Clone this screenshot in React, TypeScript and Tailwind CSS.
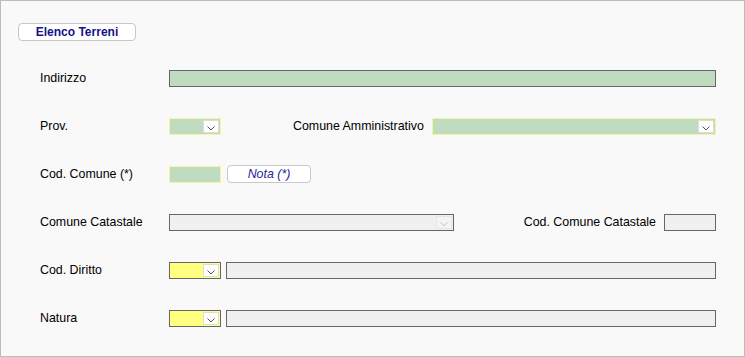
const font = { fontFamily: '"Liberation Sans", Arial, sans-serif' };

function Arrow({ disabled }: { disabled?: boolean }) {
  return (
    <div
      className={`absolute right-[1px] top-[1px] w-[16px] h-[13px] border flex items-end justify-center pb-[1px] ${
        disabled ? "bg-[#f4f4f4] border-[#e6e6e6]" : "bg-white border-[#dcdcdc]"
      }`}
    >
      <svg width="8" height="5" viewBox="0 0 8 5">
        <path d="M0.5 0.5 L4 4 L7.5 0.5" fill="none" stroke={disabled ? "#c4c4c4" : "#555"} strokeWidth="1" />
      </svg>
    </div>
  );
}

function Select({ w, bg, border, disabled }: { w: string; bg: string; border: string; disabled?: boolean }) {
  return (
    <div className={`relative h-[17px] border ${w} ${bg} ${border}`}>
      <Arrow disabled={disabled} />
    </div>
  );
}

export default function App() {
  return (
    <div style={font} className="w-[745px] h-[357px] border border-[#bcbcbc] bg-[#f9f9f9] text-[12.4px] text-black">
      <div className="pt-[22px] pl-[17px]">
        <button className="w-[118px] h-[18px] bg-white border border-[#c8c8c8] rounded-[4px] text-[12px] font-bold text-[#16128a] leading-none">
          Elenco Terreni
        </button>
      </div>

      <div className="ml-[39px] w-[676px] mt-[28px] flex flex-col gap-[31px]">
        {/* Indirizzo */}
        <div className="flex items-center h-[17px]">
          <span className="w-[129px]">Indirizzo</span>
          <div className="flex-1 h-[17px] bg-[#c0dcc0] border border-[#666]" />
        </div>

        {/* Prov. / Comune Amministrativo */}
        <div className="flex items-center h-[17px]">
          <span className="w-[129px]">Prov.</span>
          <Select w="w-[52px]" bg="bg-[#c0dcc0]" border="border-[#f5f59c]" />
          <span className="ml-[72px] w-[139px]">Comune Amministrativo</span>
          <Select w="w-[284px]" bg="bg-[#c0dcc0]" border="border-[#f5f59c]" />
        </div>

        {/* Cod. Comune */}
        <div className="flex items-center h-[17px]">
          <span className="w-[129px]">Cod. Comune (*)</span>
          <div className="w-[52px] h-[17px] bg-[#c0dcc0] border border-[#f5f59c]" />
          <button className="ml-[6px] w-[84px] h-[18px] bg-white border border-[#c8c8c8] rounded-[4px] italic text-[12.4px] text-[#1f1f9c] leading-none">
            Nota (*)
          </button>
        </div>

        {/* Comune Catastale */}
        <div className="flex items-center h-[17px]">
          <span className="w-[129px]">Comune Catastale</span>
          <Select w="w-[285px]" bg="bg-[#f0f0f0]" border="border-[#666]" disabled />
          <span className="ml-auto mr-[8px]">Cod. Comune Catastale</span>
          <div className="w-[52px] h-[17px] bg-[#f0f0f0] border border-[#666]" />
        </div>

        {/* Cod. Diritto */}
        <div className="flex items-center h-[17px]">
          <span className="w-[129px]">Cod. Diritto</span>
          <Select w="w-[52px]" bg="bg-[#ffff80]" border="border-[#666]" />
          <div className="ml-[5px] flex-1 h-[17px] bg-[#f0f0f0] border border-[#666]" />
        </div>

        {/* Natura */}
        <div className="flex items-center h-[17px]">
          <span className="w-[129px]">Natura</span>
          <Select w="w-[52px]" bg="bg-[#ffff80]" border="border-[#666]" />
          <div className="ml-[5px] flex-1 h-[17px] bg-[#f0f0f0] border border-[#666]" />
        </div>
      </div>
    </div>
  );
}
